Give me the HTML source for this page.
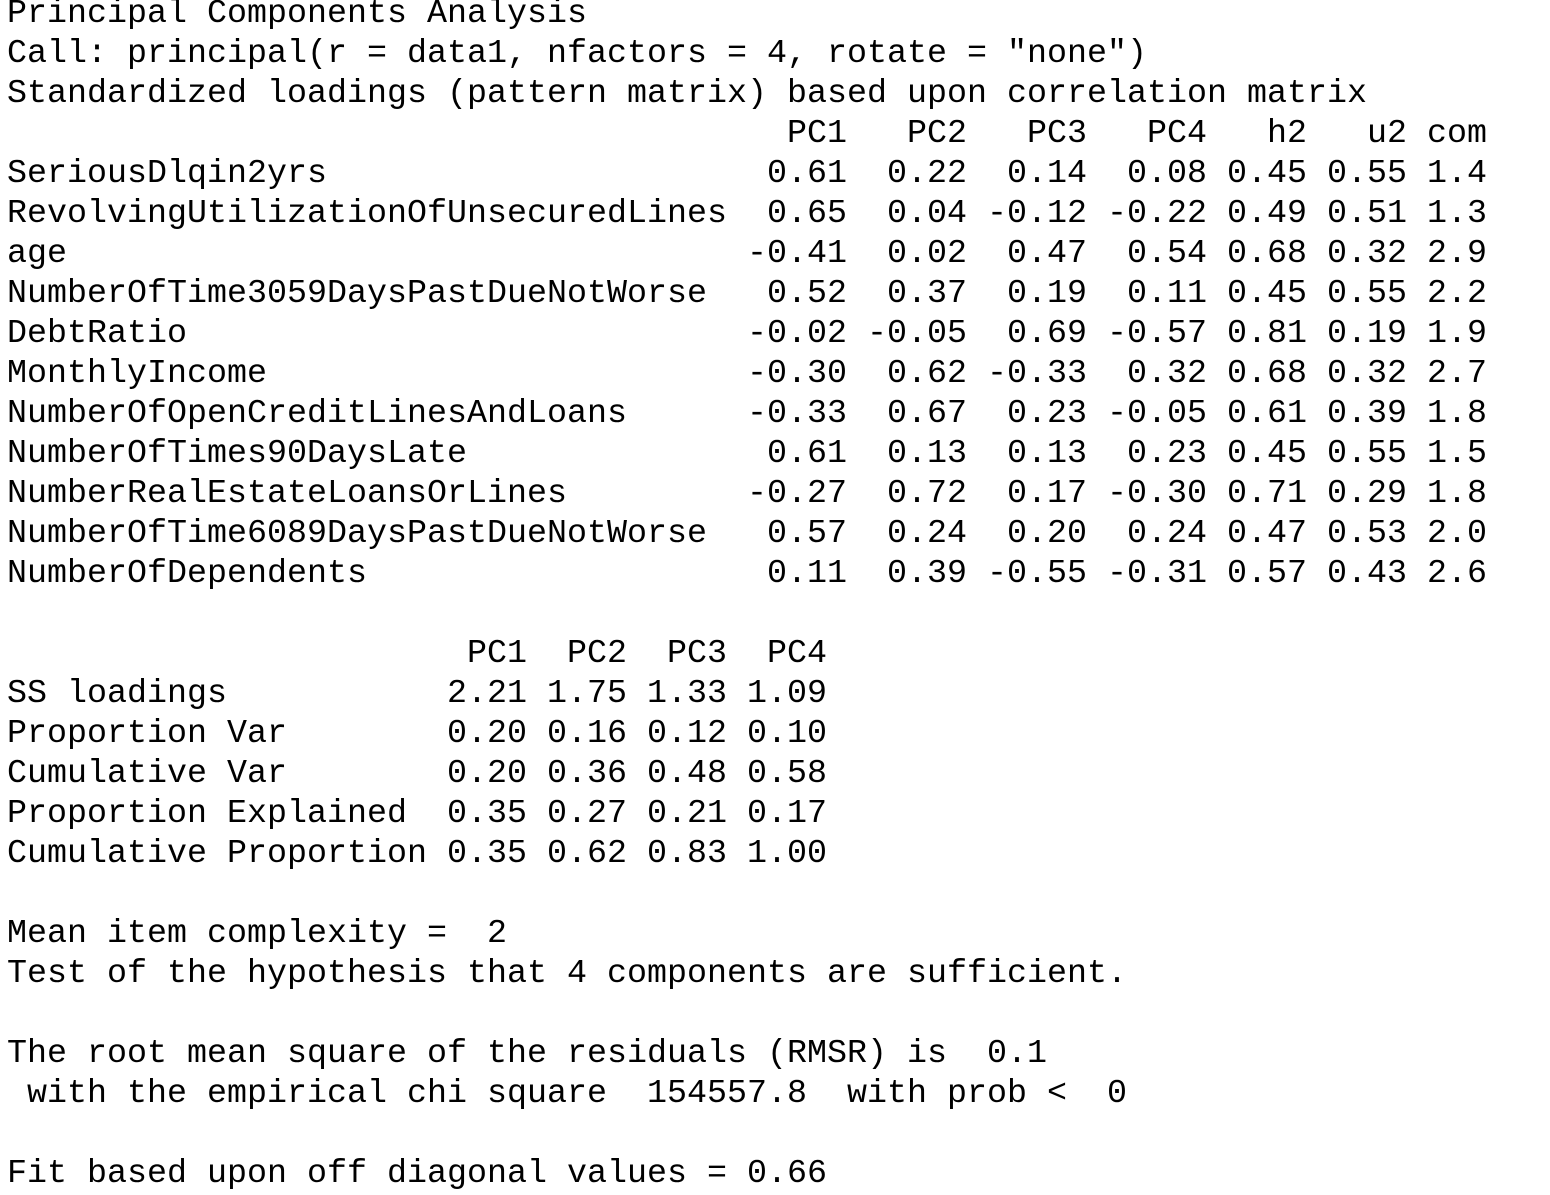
<!DOCTYPE html>
<html><head><meta charset="utf-8"><style>
html,body{margin:0;padding:0;background:#fff;width:1550px;height:1195px;overflow:hidden;}
pre{position:absolute;left:7px;top:-6px;margin:0;font-family:"Liberation Mono",monospace;font-size:33.33px;line-height:40px;color:#000;letter-spacing:0;}
</style></head><body><pre>Principal Components Analysis
Call: principal(r = data1, nfactors = 4, rotate = "none")
Standardized loadings (pattern matrix) based upon correlation matrix
                                       PC1   PC2   PC3   PC4   h2   u2 com
SeriousDlqin2yrs                      0.61  0.22  0.14  0.08 0.45 0.55 1.4
RevolvingUtilizationOfUnsecuredLines  0.65  0.04 -0.12 -0.22 0.49 0.51 1.3
age                                  -0.41  0.02  0.47  0.54 0.68 0.32 2.9
NumberOfTime3059DaysPastDueNotWorse   0.52  0.37  0.19  0.11 0.45 0.55 2.2
DebtRatio                            -0.02 -0.05  0.69 -0.57 0.81 0.19 1.9
MonthlyIncome                        -0.30  0.62 -0.33  0.32 0.68 0.32 2.7
NumberOfOpenCreditLinesAndLoans      -0.33  0.67  0.23 -0.05 0.61 0.39 1.8
NumberOfTimes90DaysLate               0.61  0.13  0.13  0.23 0.45 0.55 1.5
NumberRealEstateLoansOrLines         -0.27  0.72  0.17 -0.30 0.71 0.29 1.8
NumberOfTime6089DaysPastDueNotWorse   0.57  0.24  0.20  0.24 0.47 0.53 2.0
NumberOfDependents                    0.11  0.39 -0.55 -0.31 0.57 0.43 2.6

                       PC1  PC2  PC3  PC4
SS loadings           2.21 1.75 1.33 1.09
Proportion Var        0.20 0.16 0.12 0.10
Cumulative Var        0.20 0.36 0.48 0.58
Proportion Explained  0.35 0.27 0.21 0.17
Cumulative Proportion 0.35 0.62 0.83 1.00

Mean item complexity =  2
Test of the hypothesis that 4 components are sufficient.

The root mean square of the residuals (RMSR) is  0.1
 with the empirical chi square  154557.8  with prob &lt;  0

Fit based upon off diagonal values = 0.66</pre></body></html>
